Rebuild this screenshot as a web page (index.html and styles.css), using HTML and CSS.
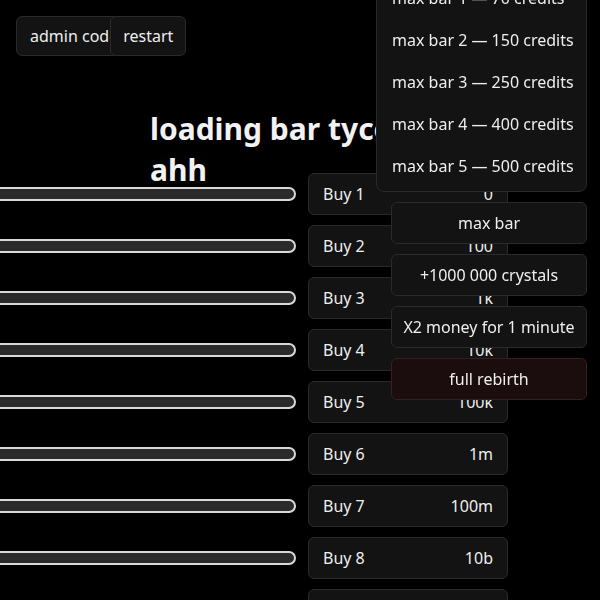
FILE: index.html
```html
<!DOCTYPE html>
<html lang="en">
<head>
<meta charset="utf-8">
<title>loading bar tycoon ahh</title>
<link rel="stylesheet" href="styles.css">
</head>
<body>
  <div class="topbar">
    <button class="btn admin-btn">admin code</button>
    <button class="btn restart-btn">restart</button>
  </div>

  <h1 class="title">loading bar tycoon ahh</h1>

  <div class="rows">
    <div class="row"><div class="bar"></div><button class="btn buy"><span>Buy 1</span><span>0</span></button></div>
    <div class="row"><div class="bar"></div><button class="btn buy"><span>Buy 2</span><span>100</span></button></div>
    <div class="row"><div class="bar"></div><button class="btn buy"><span>Buy 3</span><span>1k</span></button></div>
    <div class="row"><div class="bar"></div><button class="btn buy"><span>Buy 4</span><span>10k</span></button></div>
    <div class="row"><div class="bar"></div><button class="btn buy"><span>Buy 5</span><span>100k</span></button></div>
    <div class="row"><div class="bar"></div><button class="btn buy"><span>Buy 6</span><span>1m</span></button></div>
    <div class="row"><div class="bar"></div><button class="btn buy"><span>Buy 7</span><span>100m</span></button></div>
    <div class="row"><div class="bar"></div><button class="btn buy"><span>Buy 8</span><span>10b</span></button></div>
    <div class="row"><div class="bar"></div><button class="btn buy"><span>Buy 9</span><span>1t</span></button></div>
  </div>

  <div class="admin">
    <div class="menu">
      <div class="menu-item">max bar 1 — 70 credits</div>
      <div class="menu-item">max bar 2 — 150 credits</div>
      <div class="menu-item">max bar 3 — 250 credits</div>
      <div class="menu-item">max bar 4 — 400 credits</div>
      <div class="menu-item">max bar 5 — 500 credits</div>
    </div>
    <div class="actions">
      <button class="btn action">max bar</button>
      <button class="btn action">+1000 000 crystals</button>
      <button class="btn action">X2 money for 1 minute</button>
      <button class="btn action danger">full rebirth</button>
    </div>
  </div>
</body>
</html>
```

FILE: styles.css
```css
* { box-sizing: border-box; }

html, body {
  margin: 0;
  padding: 0;
  background: #000;
  color: #eeeeee;
  font-family: "Noto Sans", "Open Sans", sans-serif;
  overflow: hidden;
}

.btn {
  font-family: "Noto Sans", "Open Sans", sans-serif;
  font-size: 16px;
  color: #eeeeee;
  background: #131313;
  border: 1px solid #2a2a2a;
  border-radius: 6px;
  cursor: pointer;
}

.topbar {
  display: flex;
  padding: 16px 0 0 16px;
}

.admin-btn {
  height: 40px;
  padding: 0 13px;
}

.restart-btn {
  height: 40px;
  padding: 0 12px;
  margin-left: -22px;
  position: relative;
}

.title {
  font-size: 30px;
  font-weight: 700;
  line-height: 41px;
  width: 300px;
  margin: 52px 0 -17px 150px;
  color: #f2f2f2;
}

.rows {
  display: flex;
  flex-direction: column;
  gap: 10px;
}

.row {
  width: 508px;
  height: 42px;
  display: flex;
  justify-content: flex-end;
  align-items: center;
  gap: 12px;
}

.bar {
  flex: 0 0 340px;
  height: 14px;
  background: #2a2a2a;
  border: 2px solid #d9d9d9;
  border-radius: 7px;
}

.buy {
  flex: 0 0 200px;
  height: 42px;
  display: flex;
  justify-content: space-between;
  align-items: center;
  padding: 0 14px 0 14px;
}

.admin {
  position: fixed;
  top: -28px;
  right: 13px;
  display: flex;
  flex-direction: column;
  align-items: flex-end;
  gap: 10px;
}

.menu {
  width: 211px;
  padding: 4px 0;
  background: #131313;
  border: 1px solid #2a2a2a;
  border-radius: 8px;
}

.menu-item {
  height: 42px;
  line-height: 42px;
  padding: 0 15px;
  font-size: 16px;
  white-space: nowrap;
}

.actions {
  display: flex;
  flex-direction: column;
  gap: 10px;
}

.action {
  width: 196px;
  height: 42px;
  text-align: center;
  padding: 0;
}

.danger {
  background: #1b0d0d;
  border-color: #3e1d1d;
}
```
